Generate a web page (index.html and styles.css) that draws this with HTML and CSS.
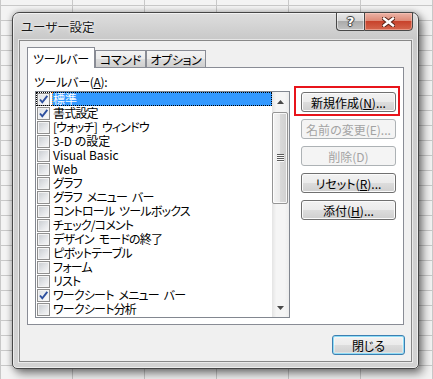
FILE: index.html
```html
<!DOCTYPE html>
<html lang="ja">
<head>
<meta charset="utf-8">
<title>ユーザー設定</title>
<link rel="stylesheet" href="styles.css">
</head>
<body>
<div class="desk">
  <div class="dialog">
    <div class="titlebar">
      <span class="title">ユーザー設定</span>
      <div class="caps">
        <div class="cap help">?</div>
        <div class="cap close">
          <svg width="13" height="10" viewBox="0 0 13 10">
            <path d="M2 1.5 L11 8.5 M11 1.5 L2 8.5" stroke="#5a2418" stroke-width="4.4" stroke-linecap="square" fill="none"/>
            <path d="M2 1.5 L11 8.5 M11 1.5 L2 8.5" stroke="#ffffff" stroke-width="2.4" stroke-linecap="square" fill="none"/>
          </svg>
        </div>
      </div>
    </div>
    <div class="client">
      <div class="tabs">
        <div class="tab active t1">ツールバー</div>
        <div class="tab t2">コマンド</div>
        <div class="tab t3">オプション</div>
      </div>
      <div class="panel">
        <div class="leftcol">
          <div class="label">ツールバー(<u>A</u>):</div>
          <div class="listbox">
            <div class="items">
              <div class="row sel"><span class="cb on"><svg width="11" height="11" viewBox="0 0 11 11"><path d="M2 5.5 L4.3 8.3 L9.3 1.8" stroke="#2d4f9e" stroke-width="1.9" fill="none"/></svg></span><span class="txt">標準</span></div>
              <div class="row"><span class="cb on"><svg width="11" height="11" viewBox="0 0 11 11"><path d="M2 5.5 L4.3 8.3 L9.3 1.8" stroke="#2d4f9e" stroke-width="1.9" fill="none"/></svg></span><span class="txt">書式設定</span></div>
              <div class="row"><span class="cb"></span><span class="txt">[ウォッチ] ウィンドウ</span></div>
              <div class="row"><span class="cb"></span><span class="txt lat">3-D の設定</span></div>
              <div class="row"><span class="cb"></span><span class="txt lat">Visual Basic</span></div>
              <div class="row"><span class="cb"></span><span class="txt lat">Web</span></div>
              <div class="row"><span class="cb"></span><span class="txt">グラフ</span></div>
              <div class="row"><span class="cb"></span><span class="txt">グラフ メニュー バー</span></div>
              <div class="row"><span class="cb"></span><span class="txt">コントロール ツールボックス</span></div>
              <div class="row"><span class="cb"></span><span class="txt">チェック/コメント</span></div>
              <div class="row"><span class="cb"></span><span class="txt">デザイン モードの終了</span></div>
              <div class="row"><span class="cb"></span><span class="txt">ピボットテーブル</span></div>
              <div class="row"><span class="cb"></span><span class="txt">フォーム</span></div>
              <div class="row"><span class="cb"></span><span class="txt">リスト</span></div>
              <div class="row"><span class="cb on"><svg width="11" height="11" viewBox="0 0 11 11"><path d="M2 5.5 L4.3 8.3 L9.3 1.8" stroke="#2d4f9e" stroke-width="1.9" fill="none"/></svg></span><span class="txt">ワークシート メニュー バー</span></div>
              <div class="row"><span class="cb"></span><span class="txt">ワークシート分析</span></div>
            </div>
            <div class="vscroll">
              <div class="sbtn"><svg width="7" height="4" viewBox="0 0 7 4"><path d="M0 4 L3.5 0 L7 4 Z" fill="#4a4a4a"/></svg></div>
              <div class="thumb"><span class="grip"></span></div>
              <div class="sbtn down"><svg width="7" height="4" viewBox="0 0 7 4"><path d="M0 0 L3.5 4 L7 0 Z" fill="#4a4a4a"/></svg></div>
            </div>
          </div>
        </div>
        <div class="btncol">
          <div class="btnwrap"><button class="btn">新規作成(<u>N</u>)...</button><span class="redbox"></span></div>
          <button class="btn dis">名前の変更(E)...</button>
          <button class="btn dis">削除(D)</button>
          <button class="btn">リセット(<u>R</u>)...</button>
          <button class="btn">添付(<u>H</u>)...</button>
        </div>
      </div>
      <div class="footer">
        <button class="btn default">閉じる</button>
      </div>
    </div>
  </div>
</div>
</body>
</html>
```

FILE: styles.css
```css
* { box-sizing: border-box; }
html, body { margin: 0; padding: 0; }
body {
  width: 433px;
  height: 379px;
  overflow: hidden;
  font-family: "Noto Sans CJK JP", "Noto Sans", sans-serif;
  font-size: 12px;
  color: #000;
  font-feature-settings: "palt";
}
.desk {
  width: 433px;
  height: 379px;
  padding: 12px 0 0 12px;
  background-color: #f3f3f3;
  background-image:
    linear-gradient(to right, #c8c8c8 1px, transparent 1px),
    linear-gradient(to bottom, #c8c8c8 1px, transparent 1px);
  background-size: 72px 100%, 100% 15px;
  background-position: 0 0, 0 5px;
}
.dialog {
  width: 407px;
  height: 357px;
  border: 1px solid #464646;
  border-radius: 7px 7px 5px 5px;
  padding: 0 6px 6px;
  display: flex;
  flex-direction: column;
  background: linear-gradient(to bottom, #dedede 0, #c9c9c9 26px, #cdcdcd 60px, #d3d3d3 100%);
  box-shadow: inset 0 0 0 1px rgba(255,255,255,0.6), 4px 5px 10px rgba(0,0,0,0.45), 0 0 6px rgba(0,0,0,0.3);
}
.titlebar {
  height: 27px;
  margin: 0 -6px;
  padding: 0 5px 0 8px;
  display: flex;
  align-items: center;
  justify-content: space-between;
}
.title {
  font-size: 12.5px;
  line-height: 14px;
  margin-top: 1px;
  color: #1a1a1a;
  text-shadow: 0 0 5px rgba(255,255,255,0.9), 0 0 2px rgba(255,255,255,0.8);
}
.caps {
  display: flex;
  align-self: flex-start;
  margin-top: -1px;
}
.cap {
  height: 19px;
  border: 1px solid #484848;
  display: flex;
  align-items: center;
  justify-content: center;
}
.help {
  width: 28px;
  border-right: none;
  border-radius: 0 0 0 4px;
  background: linear-gradient(to bottom, #e9e9e9 0, #d6d6d6 45%, #ababab 50%, #c2c2c2 100%);
  box-shadow: inset 0 0 0 1px rgba(255,255,255,0.5);
  color: #fff;
  font-family: "DejaVu Sans", sans-serif;
  font-weight: bold;
  font-size: 13px;
  line-height: 14px;
  text-shadow: 1px 0 0 #454545, -1px 0 0 #454545, 0 1px 0 #454545, 0 -1px 0 #454545, 0 0 2px #333;
}
.close {
  width: 49px;
  border-radius: 0 0 4px 0;
  background: linear-gradient(to bottom, #ecb3a6 0, #de8b78 45%, #c8432c 50%, #d5664d 100%);
  box-shadow: inset 0 0 0 1px rgba(255,210,200,0.45);
}
.client {
  flex: 1;
  border: 1px solid #888;
  background: #f0f0f0;
  padding: 6px 7px 0;
  display: flex;
  flex-direction: column;
  box-shadow: 0 0 0 1px rgba(255,255,255,0.55);
}
.tabs {
  display: flex;
  height: 20px;
  align-items: flex-end;
  position: relative;
  z-index: 1;
}
.tab {
  height: 17px;
  border: 1px solid #898c95;
  border-bottom: none;
  text-align: center;
  line-height: 17px;
  white-space: nowrap;
  letter-spacing: -0.3px;
  background: linear-gradient(to bottom, #f3f3f3, #ebebeb 50%, #dddddd 50%, #cfcfcf);
}
.tab.active {
  height: 21px;
  margin-bottom: -1px;
  background: #fff;
  line-height: 21px;
}
.t1 { width: 68px; }
.t2 { width: 51px; }
.t3 { width: 60px; }
.panel {
  height: 258px;
  border: 1px solid #898c95;
  background: #fff;
  display: flex;
  padding: 0 6px 0 7px;
}
.leftcol {
  padding-top: 7px;
  width: 255px;
}
.label {
  height: 14px;
  line-height: 14px;
  margin-left: -1px;
  letter-spacing: -0.3px;
}
.listbox {
  margin-top: 2px;
  width: 255px;
  height: 227px;
  border: 1px solid #828790;
  display: flex;
  background: #fff;
}
.items { flex: 1; }
.row {
  height: 14px;
  display: flex;
  align-items: flex-start;
}
.row.sel {
  outline: 1px dotted #000;
  outline-offset: -1px;
}
.cb {
  width: 13px;
  height: 13px;
  margin: 1px 0 0 1px;
  border: 1px solid #8f8f8f;
  background: linear-gradient(135deg, #c6cace 0%, #e3e5e8 55%, #f9f9f9 100%);
  box-shadow: inset 0 0 0 1px #f3f3f3;
  display: flex;
  align-items: center;
  justify-content: center;
}
.cb.on {
  background: linear-gradient(135deg, #dcdfe3 0%, #eef0f2 55%, #fcfcfc 100%);
}
.txt {
  margin-left: 2px;
  flex: 1;
  height: 14px;
  line-height: 14px;
  padding-left: 1px;
  white-space: nowrap;
  letter-spacing: -0.8px;
  word-spacing: 3px;
}
.txt.lat { letter-spacing: 0; word-spacing: 0; }
.row.sel .txt {
  background: #3399ff;
  color: #fff;
  outline: 1px dotted #ffa040;
  outline-offset: -1px;
  letter-spacing: 0;
}
.vscroll {
  width: 17px;
  display: flex;
  flex-direction: column;
  background: linear-gradient(to right, #e4e4e4, #f5f5f5 25%, #f5f5f5 75%, #ececec);
}
.sbtn {
  height: 19px;
  display: flex;
  align-items: center;
  justify-content: center;
}
.sbtn.down { margin-top: auto; }
.thumb {
  margin: 1px 1px 0 0;
  height: 92px;
  border: 1px solid #959595;
  border-radius: 2px;
  background: linear-gradient(to right, #f4f4f4, #eaeaea 50%, #d9d9d9 51%, #d0d0d0);
  box-shadow: inset 0 0 0 1px rgba(255,255,255,0.8);
  display: flex;
  align-items: center;
  justify-content: center;
}
.grip {
  width: 7px;
  height: 8px;
  background: repeating-linear-gradient(to bottom, #5a5a5a 0 1px, #fafafa 1px 2px);
}
.btncol {
  margin-left: 11px;
  padding-top: 24px;
  width: 95px;
  display: flex;
  flex-direction: column;
  gap: 7px;
}
.btnwrap { position: relative; height: 20px; }
.btn {
  display: block;
  height: 20px;
  width: 95px;
  margin: 0;
  padding: 0;
  border: 1px solid #707070;
  border-radius: 3px;
  background: linear-gradient(to bottom, #f2f2f2, #ebebeb 50%, #dddddd 50%, #cfcfcf);
  box-shadow: inset 0 0 0 1px #fbfbfb;
  font-family: inherit;
  font-feature-settings: inherit;
  font-size: 12px;
  line-height: 17px;
  color: #000;
  text-align: center;
  white-space: nowrap;
}
.btn.dis {
  border-color: #adb2b5;
  background: #f4f4f4;
  box-shadow: none;
  color: #a3a3a3;
}
.redbox {
  position: absolute;
  left: -7px;
  top: -6px;
  width: 106px;
  height: 30px;
  border: 2px solid #e8141b;
  pointer-events: none;
}
.footer {
  display: flex;
  justify-content: flex-end;
  padding-top: 10px;
  margin-right: -1px;
}
.btn.default {
  width: 73px;
  border-color: #3c7fb1;
  box-shadow: inset 0 0 0 1px #8fdcf6, inset 0 0 0 2px rgba(255,255,255,0.35);
}
```
